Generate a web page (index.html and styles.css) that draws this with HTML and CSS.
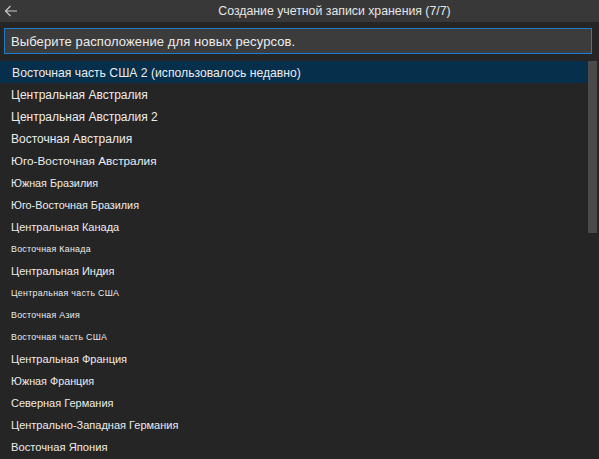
FILE: index.html
```html
<!DOCTYPE html>
<html lang="ru">
<head>
<meta charset="utf-8">
<title>Создание учетной записи хранения</title>
<link rel="stylesheet" href="styles.css">
</head>
<body>
<div class="app">
  <header class="titlebar">
    <button class="back" aria-label="Назад">
      <svg width="14" height="12" viewBox="0 0 14 12"><path d="M13 6H1.5M6.5 1L1.5 6l5 5" fill="none" stroke="#c8c8c8" stroke-width="1.2"/></svg>
    </button>
    <div class="title">Создание учетной записи хранения (7/7)</div>
  </header>
  <div class="inputwrap">
    <div class="input">Выберите расположение для новых ресурсов.</div>
  </div>
  <div class="listwrap">
    <ul class="list">
      <li class="item selected f122">Восточная часть США 2 (использовалось недавно)</li>
      <li class="item f120">Центральная Австралия</li>
      <li class="item f120">Центральная Австралия 2</li>
      <li class="item f120">Восточная Австралия</li>
      <li class="item f118">Юго-Восточная Австралия</li>
      <li class="item f108">Южная Бразилия</li>
      <li class="item f108">Юго-Восточная Бразилия</li>
      <li class="item f110">Центральная Канада</li>
      <li class="item f092 ls">Восточная Канада</li>
      <li class="item f110">Центральная Индия</li>
      <li class="item f096 ls">Центральная часть США</li>
      <li class="item f092 ls">Восточная Азия</li>
      <li class="item f094 ls">Восточная часть США</li>
      <li class="item f110">Центральная Франция</li>
      <li class="item f108">Южная Франция</li>
      <li class="item f110">Северная Германия</li>
      <li class="item f110">Центрально-Западная Германия</li>
      <li class="item f112">Восточная Япония</li>
    </ul>
    <div class="scrollbar"></div>
  </div>
</div>
</body>
</html>
```

FILE: styles.css
```css
* { box-sizing: border-box; }
html, body { margin: 0; padding: 0; }
body {
  background: #252526;
  font-family: "Liberation Sans", Arial, sans-serif;
  color: #e8e8e8;
  width: 599px;
  height: 459px;
  overflow: hidden;
}
.app { display: flex; flex-direction: column; height: 459px; }
.titlebar {
  height: 22px;
  background: #383838;
  display: flex;
  align-items: center;
}
.back {
  background: none;
  border: 0;
  padding: 0;
  margin-left: 3px;
  width: 16px;
  height: 16px;
  display: flex;
  align-items: center;
  justify-content: center;
}
.title {
  flex: 1;
  text-align: center;
  font-size: 12.3px;
  color: #e6e6e6;
  padding-left: 51px;
}
.inputwrap { padding: 6px 7px 0 4px; }
.input {
  height: 26px;
  background: #3c3c3c;
  border: 1px solid #1b7fd1;
  font-size: 13px;
  letter-spacing: 0.1px;
  color: #ececec;
  padding-left: 6px;
  display: flex;
  align-items: center;
}
.listwrap {
  margin-top: 7px;
  position: relative;
  flex: 1;
}
.list { list-style: none; margin: 0; padding: 0; width: 587px; }
.item {
  height: 22px;
  display: flex;
  align-items: center;
  padding-left: 11px;
  padding-top: 2px;
  white-space: nowrap;
  color: #ececec;
}
.item.selected { background: #062f4c; padding-left: 12px; }
.f122 { font-size: 12.2px; }
.f120 { font-size: 12px; }
.f118 { font-size: 11.8px; }
.f112 { font-size: 11.2px; }
.f110 { font-size: 11px; }
.f108 { font-size: 10.8px; }
.f096 { font-size: 9.6px; }
.f094 { font-size: 9.4px; }
.f092 { font-size: 9.2px; }
.ls { font-size: 8.8px; letter-spacing: 0.3px; }
.scrollbar {
  position: absolute;
  left: 588px;
  top: 0;
  width: 9px;
  height: 172px;
  background: #4a4a4a;
}
```
